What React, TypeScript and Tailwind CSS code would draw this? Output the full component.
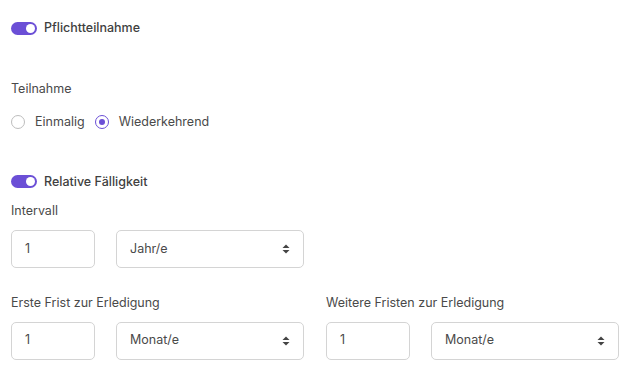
import React from "react";

function Toggle() {
  return (
    <span className="flex h-[13px] w-[26px] items-center justify-end rounded-full bg-[#6b4fd6] pr-[2px]">
      <span className="h-[9px] w-[9px] rounded-full bg-white" />
    </span>
  );
}

function Radio({ checked, label }: { checked?: boolean; label: string }) {
  return (
    <label className="flex items-center gap-[10px]">
      <span
        className={
          checked
            ? "flex h-[14px] w-[14px] items-center justify-center rounded-full border border-[#6b4fd6]"
            : "flex h-[14px] w-[14px] items-center justify-center rounded-full border border-[#bdbdbd]"
        }
      >
        {checked && <span className="h-[6px] w-[6px] rounded-full bg-[#6b4fd6]" />}
      </span>
      <span>{label}</span>
    </label>
  );
}

function SelectArrows() {
  return (
    <svg width="8" height="10" viewBox="0 0 8 10" className="text-[#444]">
      <path d="M4 0.5 L7.5 4 L0.5 4 Z" fill="currentColor" />
      <path d="M4 9.5 L7.5 6 L0.5 6 Z" fill="currentColor" />
    </svg>
  );
}

function Field({ unit }: { unit: string }) {
  return (
    <div className="flex gap-[21px]">
      <div className="flex h-[38px] w-[84px] items-center rounded-[5px] border border-[#d4d4d4] px-[13px]">
        1
      </div>
      <div className="flex h-[38px] w-[188px] items-center justify-between rounded-[5px] border border-[#d4d4d4] pl-[13px] pr-[13px]">
        <span>{unit}</span>
        <SelectArrows />
      </div>
    </div>
  );
}

export default function App() {
  return (
    <div
      className="h-[376px] w-[637px] bg-white pl-[11px] text-[12.5px] text-[#4a4a4a]"
      style={{ fontFamily: "Inter, 'Liberation Sans', sans-serif" }}
    >
      <div className="flex h-[56px] items-center gap-[7px] font-medium text-[#3f3f3f]">
        <Toggle />
        <span>Pflichtteilnahme</span>
      </div>

      <div className="mt-[24px] text-[#4a4a4a]">Teilnahme</div>
      <div className="mt-[14px] flex items-center gap-[10px]">
        <Radio label="Einmalig" />
        <Radio checked label="Wiederkehrend" />
      </div>

      <div className="mt-[41px] flex items-center gap-[7px] font-medium text-[#3f3f3f]">
        <Toggle />
        <span>Relative Fälligkeit</span>
      </div>
      <div className="mt-[11px]">Intervall</div>
      <div className="mt-[9px]">
        <Field unit="Jahr/e" />
      </div>

      <div className="mt-[26px] grid grid-cols-[293px_293px] gap-x-[22px]">
        <div>
          <div>Erste Frist zur Erledigung</div>
          <div className="mt-[9px]">
            <Field unit="Monat/e" />
          </div>
        </div>
        <div>
          <div>Weitere Fristen zur Erledigung</div>
          <div className="mt-[9px]">
            <Field unit="Monat/e" />
          </div>
        </div>
      </div>
    </div>
  );
}
